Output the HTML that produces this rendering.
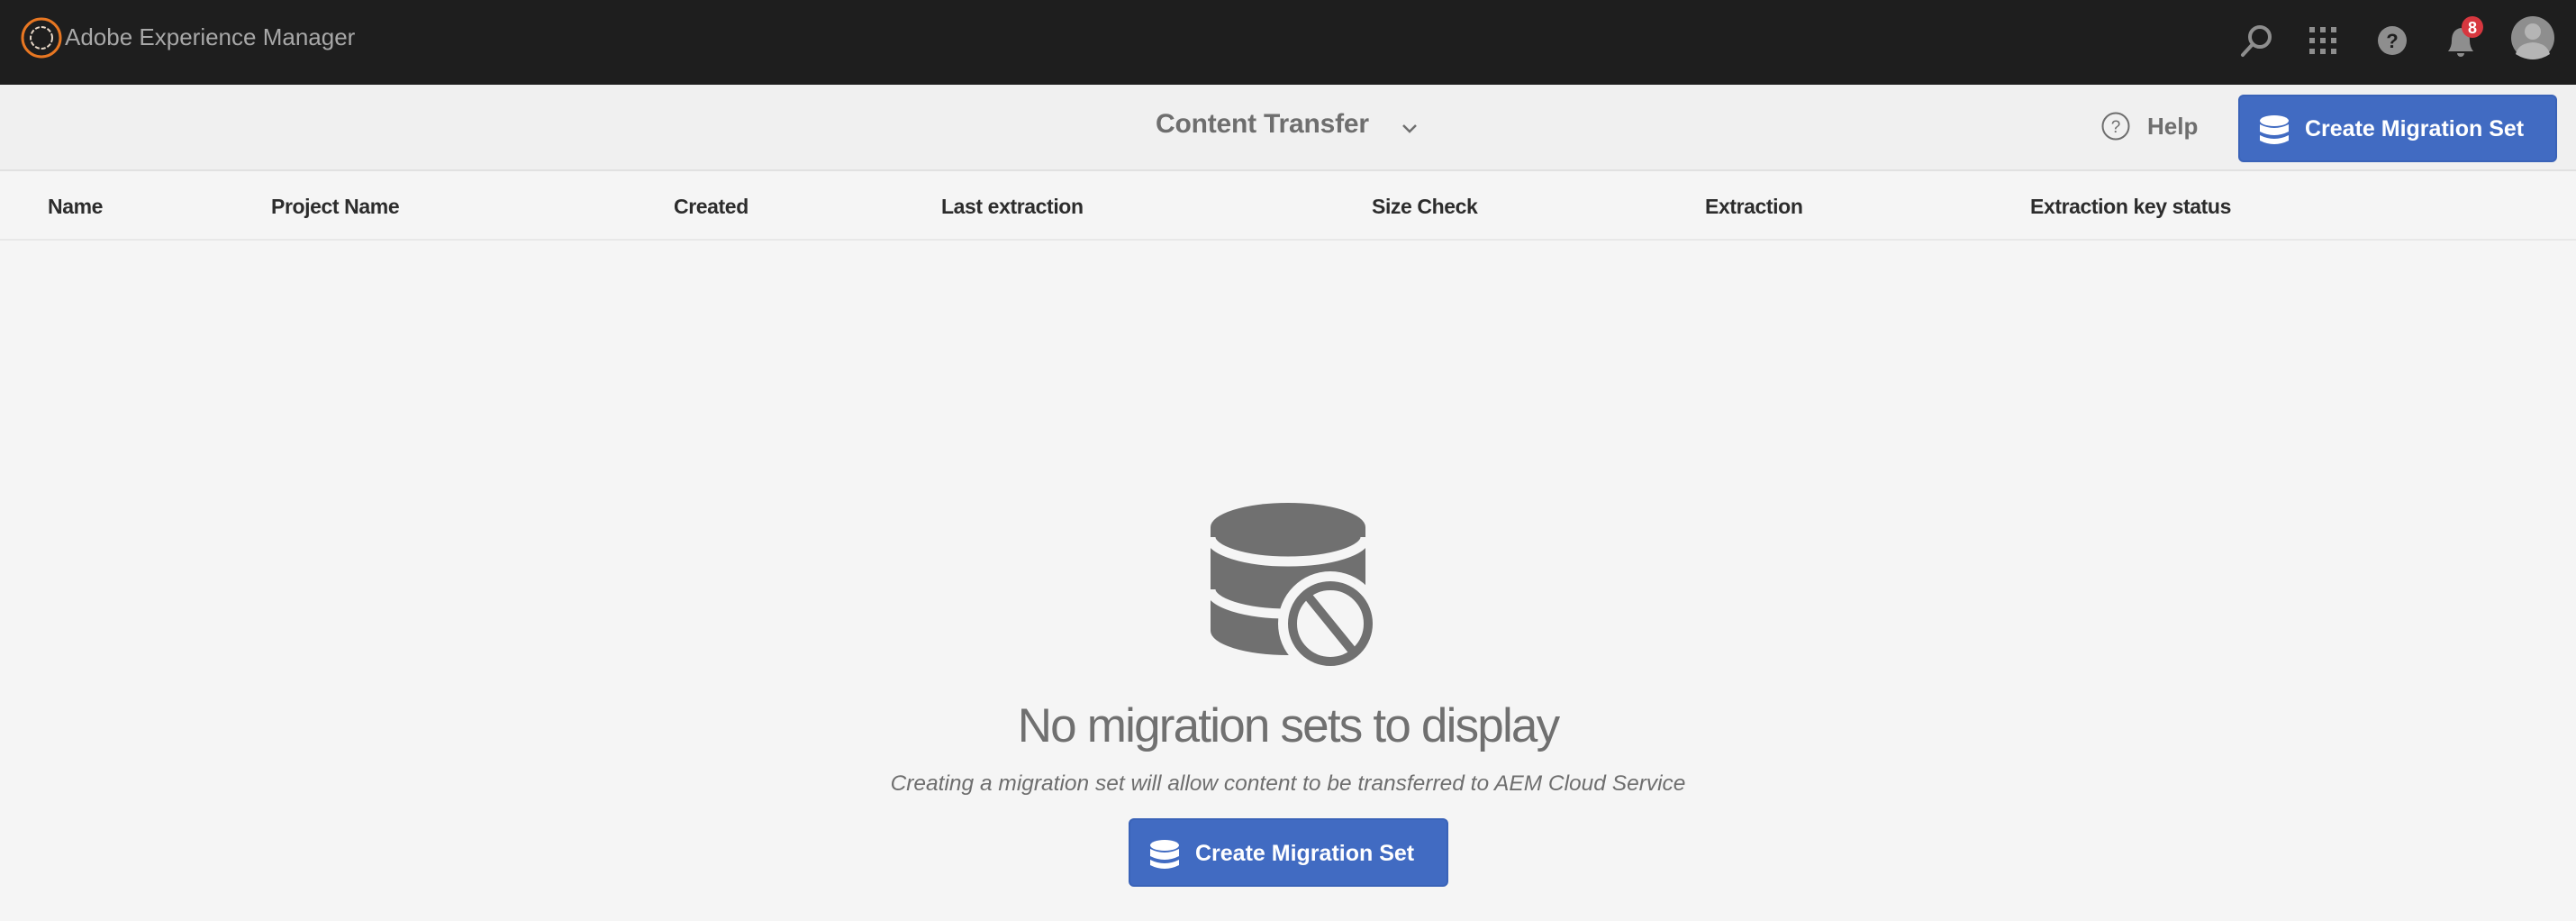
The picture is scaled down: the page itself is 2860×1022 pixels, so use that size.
<!DOCTYPE html>
<html><head><meta charset="utf-8"><style>
*{margin:0;padding:0;box-sizing:border-box}
body{width:2860px;height:1022px;background:#f5f5f5;font-family:"Liberation Sans",sans-serif;position:relative;overflow:hidden}
.top{position:absolute;left:0;top:0;width:2860px;height:94px;background:#1e1e1e}
.bar{position:absolute;left:0;top:94px;width:2860px;height:96px;background:#f0f0f0;border-bottom:2px solid #e1e1e1}
.hdr{position:absolute;left:0;top:190px;width:2860px;height:77px;border-bottom:2px solid #e8e8e8}
.t{position:absolute;white-space:nowrap}
.h{font-weight:bold;font-size:23px;letter-spacing:-0.4px;color:#2c2c2c;top:216px}
.btn{position:absolute;background:#416bc2;border:2px solid #3a63b8;border-radius:6px;color:#fff}
.btn span{position:absolute;font-weight:bold;font-size:25px;letter-spacing:0px;white-space:nowrap}
</style></head><body>
<div class="top"></div>
<svg style="position:absolute;left:0;top:0" width="2860" height="94">
<circle cx="46" cy="42" r="21" fill="none" stroke="#e87722" stroke-width="3"/>
<circle cx="46" cy="42" r="12" fill="none" stroke="#e8d8c8" stroke-width="2" stroke-dasharray="5 2"/>
<circle cx="2509" cy="41" r="11" fill="none" stroke="#8e8e8e" stroke-width="4"/>
<line x1="2501" y1="49" x2="2490" y2="61" stroke="#8e8e8e" stroke-width="4" stroke-linecap="round"/>
<g fill="#8e8e8e">
<rect x="2564" y="30" width="6" height="6"/><rect x="2576" y="30" width="6" height="6"/><rect x="2588" y="30" width="6" height="6"/>
<rect x="2564" y="42" width="6" height="6"/><rect x="2576" y="42" width="6" height="6"/><rect x="2588" y="42" width="6" height="6"/>
<rect x="2564" y="54" width="6" height="6"/><rect x="2576" y="54" width="6" height="6"/><rect x="2588" y="54" width="6" height="6"/>
<circle cx="2656" cy="45" r="16"/>
<path d="M2718 57 Q2722 52 2722 45 Q2722 33 2732 31 Q2742 33 2742 45 Q2742 52 2746 57 Z"/>
<path d="M2728 59 h8 a4 4 0 0 1 -8 0Z"/>
<circle cx="2812" cy="42" r="24"/>
</g>
<text x="2656" y="53" font-family="Liberation Sans" font-weight="bold" font-size="22" fill="#1e1e1e" text-anchor="middle">?</text>
<circle cx="2745" cy="30" r="12" fill="#d7373f"/>
<text x="2745" y="37" font-family="Liberation Sans" font-weight="bold" font-size="18" fill="#fff" text-anchor="middle">8</text>
<g fill="#b5b5b5"><circle cx="2812" cy="35" r="9"/><path d="M2793 60 Q2796 48 2812 47 Q2828 48 2831 60 Q2822 66 2812 66 Q2802 66 2793 60Z"/></g>
</svg>
<div class="t" style="left:72px;top:26px;font-size:26px;color:#a8a8a8">Adobe Experience Manager</div>
<div class="bar"></div>
<div class="t" style="left:1283px;top:121px;font-size:30px;font-weight:bold;letter-spacing:-0.2px;color:#6e6e6e">Content Transfer</div>
<svg style="position:absolute;left:1556px;top:136px" width="20" height="14"><path d="M2 3 L9 10 L16 3" fill="none" stroke="#6e6e6e" stroke-width="2.5"/></svg>
<svg style="position:absolute;left:2332px;top:123px" width="34" height="34"><circle cx="17" cy="17" r="14.5" fill="none" stroke="#6e6e6e" stroke-width="2"/><text x="17" y="24" font-family="Liberation Sans" font-size="19" fill="#6e6e6e" text-anchor="middle">?</text></svg>
<div class="t" style="left:2384px;top:125px;font-size:26px;font-weight:bold;color:#6e6e6e">Help</div>
<div class="btn" style="left:2485px;top:105px;width:354px;height:75px">
<svg style="position:absolute;left:21px;top:21px" width="34" height="34" fill="#fff"><ellipse cx="17" cy="6" rx="16" ry="6"/><path d="M1 10 Q17 18 33 10 V18 Q17 26 1 18Z"/><path d="M1 22 Q17 30 33 22 V28 Q17 36 1 28Z"/></svg>
<span style="left:72px;top:22px">Create Migration Set</span></div>
<div class="hdr"></div>
<div class="t h" style="left:53px">Name</div>
<div class="t h" style="left:301px">Project Name</div>
<div class="t h" style="left:748px">Created</div>
<div class="t h" style="left:1045px">Last extraction</div>
<div class="t h" style="left:1523px">Size Check</div>
<div class="t h" style="left:1893px">Extraction</div>
<div class="t h" style="left:2254px">Extraction key status</div>
<svg style="position:absolute;left:0;top:0" width="2860" height="1022">
<g fill="#707070">
<ellipse cx="1430" cy="585" rx="86" ry="27"/>
<rect x="1344" y="585" width="172" height="115"/>
<ellipse cx="1430" cy="700" rx="86" ry="27"/>
</g>
<path d="M1344 596 A86 27 0 0 0 1516 596" fill="none" stroke="#f5f5f5" stroke-width="11"/>
<path d="M1344 654 A86 27 0 0 0 1516 654" fill="none" stroke="#f5f5f5" stroke-width="11"/>
<circle cx="1477" cy="692" r="58" fill="#f5f5f5"/>
<circle cx="1477" cy="692" r="42" fill="none" stroke="#707070" stroke-width="10"/>
<line x1="1451" y1="660" x2="1503" y2="724" stroke="#707070" stroke-width="10"/>
</svg>
<div class="t" style="left:0;width:2860px;text-align:center;top:775px;font-size:53px;letter-spacing:-1.8px;color:#707070">No migration sets to display</div>
<div class="t" style="left:0;width:2860px;text-align:center;top:856px;font-size:24.5px;font-style:italic;color:#6e6e6e">Creating a migration set will allow content to be transferred to AEM Cloud Service</div>
<div class="btn" style="left:1253px;top:908px;width:355px;height:76px">
<svg style="position:absolute;left:21px;top:22px" width="34" height="34" fill="#fff"><ellipse cx="17" cy="6" rx="16" ry="6"/><path d="M1 10 Q17 18 33 10 V18 Q17 26 1 18Z"/><path d="M1 22 Q17 30 33 22 V28 Q17 36 1 28Z"/></svg>
<span style="left:72px;top:23px">Create Migration Set</span></div>
</body></html>
